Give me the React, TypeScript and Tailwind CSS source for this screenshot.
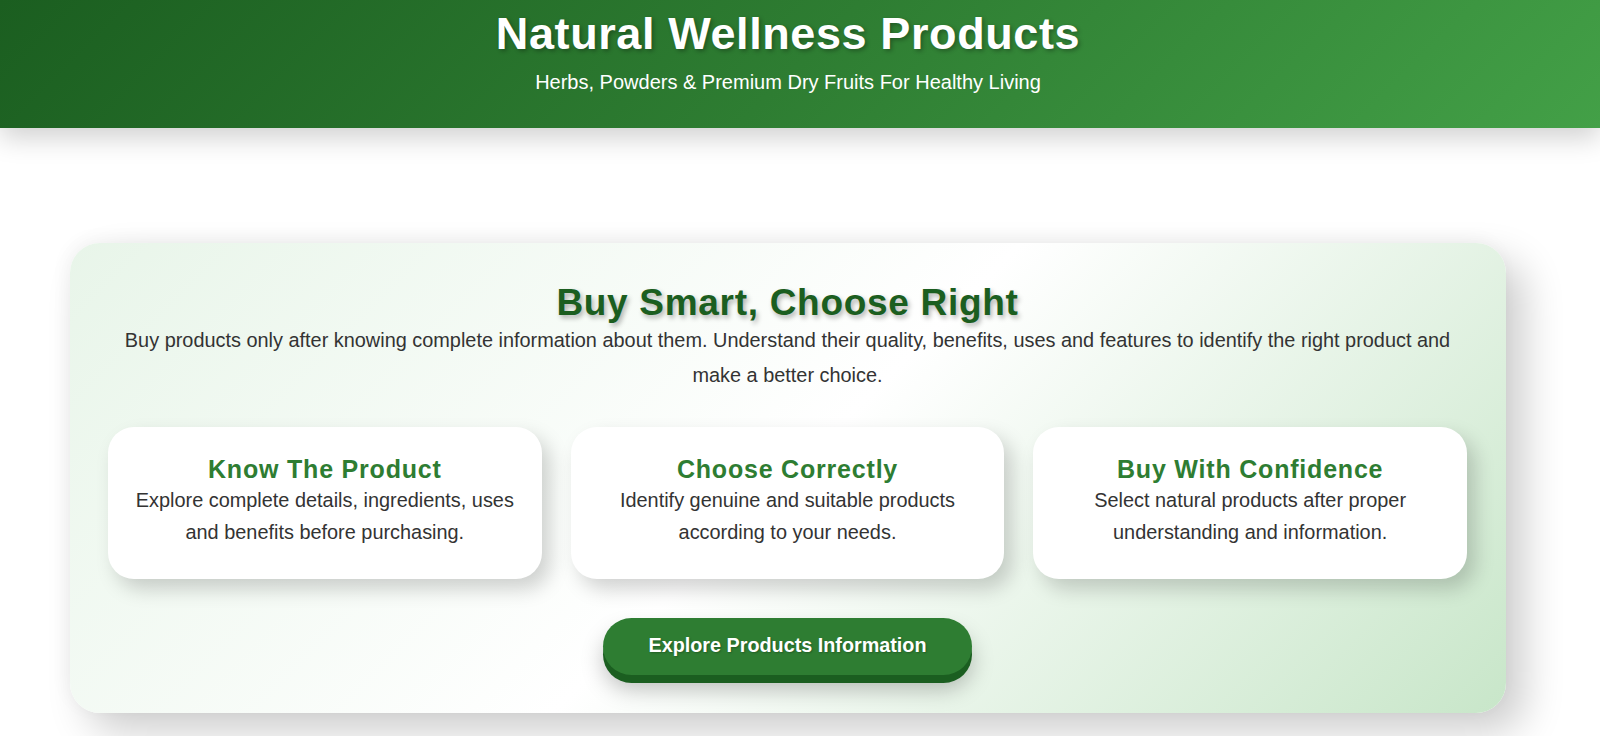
const features = [
  {
    title: 'Know The Product',
    text: 'Explore complete details, ingredients, uses and benefits before purchasing.',
  },
  {
    title: 'Choose Correctly',
    text: 'Identify genuine and suitable products according to your needs.',
  },
  {
    title: 'Buy With Confidence',
    text: 'Select natural products after proper understanding and information.',
  },
]

function FeatureCard({ title, text }: { title: string; text: string }) {
  return (
    <div className="bg-white rounded-[26px] px-[25px] pt-[27px] pb-[30px] text-center shadow-[8px_10px_20px_rgba(0,0,0,0.18)]">
      <h3 className="text-[25px] leading-[30px] font-bold tracking-[0.8px] text-[#2e7d32]">{title}</h3>
      <p className="text-[19.9px] leading-[32.3px] text-[#333]">{text}</p>
    </div>
  )
}

export default function App() {
  return (
    <div className="min-h-screen bg-white font-['Liberation_Sans',Arial,sans-serif]">
      <header className="relative z-10 h-[128px] bg-[linear-gradient(135deg,#1b5e20,#2e7d32,#43a047)] shadow-[0_10px_25px_rgba(0,0,0,0.18)]">
        <div className="w-[1576px] pt-[8px] text-center text-white">
          <h1 className="text-[45px] leading-[52px] font-bold tracking-[0.6px] [text-shadow:2px_2px_4px_rgba(0,0,0,0.3)]">
            Natural Wellness Products
          </h1>
          <p className="mt-[10px] text-[20px] leading-[24px]">
            Herbs, Powders &amp; Premium Dry Fruits For Healthy Living
          </p>
        </div>
      </header>

      <main className="w-[1576px] pt-[115px] pb-[23px]">
        <section className="mx-[70px] rounded-[30px] bg-[linear-gradient(135deg,#e8f5e9,#ffffff,#c8e6c9)] pt-[40px] pb-[38px] pl-[38px] pr-[39px] shadow-[18px_18px_40px_rgba(0,0,0,0.2),-4px_-4px_18px_rgba(0,0,0,0.04)]">
          <h2 className="text-center text-[37px] leading-[40px] font-bold tracking-[0.7px] text-[#1b5e20] [text-shadow:2px_3px_5px_rgba(0,0,0,0.3)]">
            Buy Smart, Choose Right
          </h2>
          <p className="text-center text-[19.9px] leading-[34.6px] text-[#333]">
            Buy products only after knowing complete information about them. Understand their quality, benefits, uses and
            features to identify the right product and make a better choice.
          </p>

          <div className="mt-[35px] grid grid-cols-3 gap-[29px]">
            {features.map((f) => (
              <FeatureCard key={f.title} title={f.title} text={f.text} />
            ))}
          </div>

          <div className="mt-[39px] flex justify-center">
            <button className="h-[57px] px-[45px] rounded-full bg-[#2e7d32] text-white text-[19.8px] font-bold [text-shadow:1px_1px_2px_rgba(0,0,0,0.25)] shadow-[0_8px_0_#1b5e20,0_14px_22px_rgba(0,0,0,0.25)]">
              Explore Products Information
            </button>
          </div>
        </section>
      </main>
    </div>
  )
}
